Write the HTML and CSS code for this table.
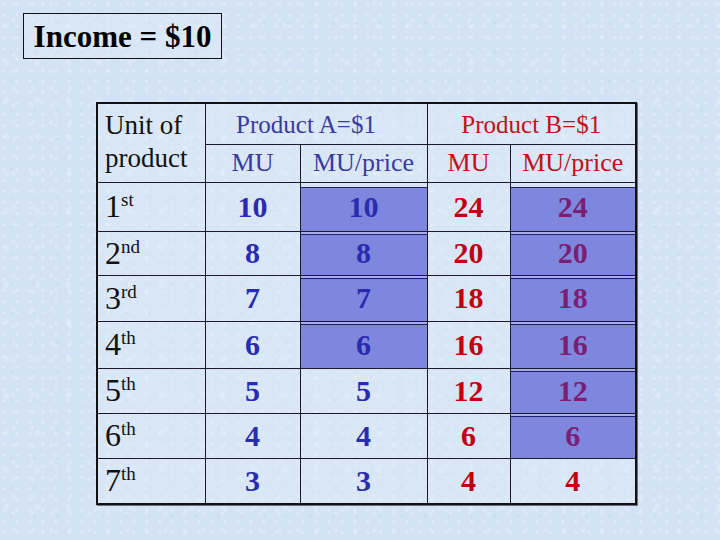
FILE: index.html
```html
<!DOCTYPE html>
<html>
<head>
<meta charset="utf-8">
<link rel="stylesheet" href="styles.css">
</head>
<body>
<div class="page">
  <div class="title">Income = $10</div>
  <table class="mu">
    <colgroup>
      <col class="c1"><col class="c2"><col class="c3"><col class="c4"><col class="c5">
    </colgroup>
    <tr class="h1">
      <td class="unit" rowspan="2">Unit of<br>product</td>
      <td class="ha sep" colspan="2">Product A=$1</td>
      <td class="hb" colspan="2">Product B=$1</td>
    </tr>
    <tr class="h2">
      <td class="ha">MU</td>
      <td class="ha sep">MU/price</td>
      <td class="hb">MU</td>
      <td class="hb">MU/price</td>
    </tr>
    <tr class="r1">
      <td class="ord">1<span class="sup">st</span></td>
      <td class="na">10</td><td class="na hl first">10</td>
      <td class="nb">24</td><td class="nbp hl first">24</td>
    </tr>
    <tr class="r2">
      <td class="ord">2<span class="sup">nd</span></td>
      <td class="na">8</td><td class="na hl">8</td>
      <td class="nb">20</td><td class="nbp hl">20</td>
    </tr>
    <tr class="r3">
      <td class="ord">3<span class="sup">rd</span></td>
      <td class="na">7</td><td class="na hl">7</td>
      <td class="nb">18</td><td class="nbp hl">18</td>
    </tr>
    <tr class="r4">
      <td class="ord">4<span class="sup">th</span></td>
      <td class="na">6</td><td class="na hl">6</td>
      <td class="nb">16</td><td class="nbp hl">16</td>
    </tr>
    <tr class="r5">
      <td class="ord">5<span class="sup">th</span></td>
      <td class="na">5</td><td class="na">5</td>
      <td class="nb">12</td><td class="nbp hl">12</td>
    </tr>
    <tr class="r6">
      <td class="ord">6<span class="sup">th</span></td>
      <td class="na">4</td><td class="na">4</td>
      <td class="nb">6</td><td class="nbp hl">6</td>
    </tr>
    <tr class="r7">
      <td class="ord">7<span class="sup">th</span></td>
      <td class="na">3</td><td class="na">3</td>
      <td class="nb">4</td><td class="nb">4</td>
    </tr>
  </table>
</div>
</body>
</html>
```
FILE: styles.css
```css
html, body {
  margin: 0;
  padding: 0;
}
body {
  width: 720px;
  height: 540px;
  overflow: hidden;
  font-family: "Liberation Serif", "Times New Roman", serif;
  background-color: #d3e3f5;
  background-image:
    radial-gradient(circle at 30% 40%, rgba(255,255,255,0.28) 0 1px, transparent 2px),
    radial-gradient(circle at 70% 20%, rgba(255,255,255,0.22) 0 1px, transparent 3px),
    radial-gradient(circle at 50% 80%, rgba(185,205,232,0.3) 0 1px, transparent 2px),
    radial-gradient(circle at 20% 70%, rgba(255,255,255,0.18) 0 2px, transparent 4px);
  background-size: 13px 11px, 19px 17px, 23px 29px, 31px 37px;
}
.page {
  display: flow-root;
}
.title {
  box-sizing: border-box;
  width: 199px;
  height: 46px;
  margin: 13px 0 0 23px;
  border: 1px solid #111;
  font-weight: bold;
  font-size: 31px;
  line-height: 45px;
  text-align: center;
  color: #000;
  background: rgba(225, 236, 250, 0.35);
}
.mu {
  margin: 43px 0 0 96px;
  border-collapse: collapse;
  table-layout: fixed;
  border: 2px solid #111;
  box-shadow: 1px 1px 0 #6a7080;
}
.c1 { width: 108px; }
.c2 { width: 95px; }
.c3 { width: 127px; }
.c4 { width: 83px; }
.c5 { width: 126px; }
.mu td {
  border: 1px solid #1a1a2a;
  padding: 0;
  text-align: center;
  vertical-align: middle;
  background: rgba(228, 238, 250, 0.3);
}
.h1 { height: 41px; }
.h2 { height: 38px; }
.r1 { height: 49px; }
.r2 { height: 44px; }
.r3 { height: 46px; }
.r4 { height: 47px; }
.r5 { height: 45px; }
.r6 { height: 45px; }
.r7 { height: 46px; }
.mu td.unit {
  text-align: left;
  vertical-align: top;
  padding: 5px 0 0 7px;
  font-size: 27px;
  line-height: 33px;
  color: #111;
}
.h1 td.ha, .h1 td.hb {
  border-bottom: 1px solid #1a1a2a;
  border-top: 0;
  font-size: 25px;
  padding-top: 2px;
}
.h2 td { font-size: 26px; }
.ha { color: #3b3ba0; }
.hb { color: #c0101a; }
.h1 td.ha { padding-right: 20px; }
.ord {
  text-align: left !important;
  padding-left: 7px !important;
  font-size: 32px;
  color: #111;
}
.sup {
  font-size: 19px;
  vertical-align: 11px;
}
.na, .nb, .nbp {
  font-weight: bold;
  font-size: 30px;
}
.na { color: #2b2bb0; }
.nb { color: #c00010; }
.nbp { color: #7a1f74; }
.mu td.hl {
  background: #7e86dd;
  box-shadow: inset 0 2px 0 #a8aeea, inset 0 3px 0 #1e1e6e;
}
.mu td.hl.first {
  box-shadow: inset 0 4px 0 #d7e5f6, inset 0 5px 0 #1e1e6e;
}
```
